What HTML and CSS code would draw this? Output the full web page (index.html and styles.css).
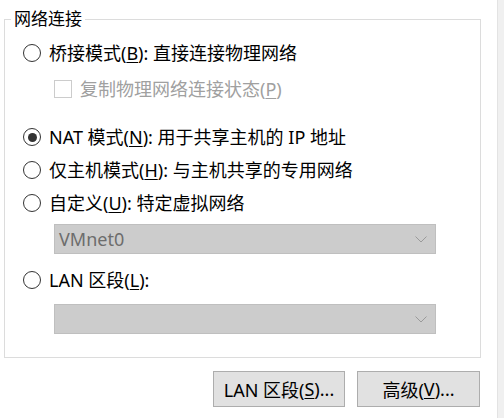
FILE: index.html
```html
<!DOCTYPE html>
<html lang="zh-CN">
<head>
<meta charset="utf-8">
<link rel="stylesheet" href="styles.css">
</head>
<body>
<div class="main">
  <fieldset class="group">
    <legend class="legend">网络连接</legend>
    <div class="row r-bridge">
      <span class="radio"></span>
      <span class="label">桥接模式(<u>B</u>): 直接连接物理网络</span>
    </div>
    <div class="row r-check">
      <span class="check"></span>
      <span class="label disabled">复制物理网络连接状态(<u>P</u>)</span>
    </div>
    <div class="row r-nat">
      <span class="radio on"></span>
      <span class="label">NAT 模式(<u>N</u>): 用于共享主机的 IP 地址</span>
    </div>
    <div class="row r-host">
      <span class="radio"></span>
      <span class="label">仅主机模式(<u>H</u>): 与主机共享的专用网络</span>
    </div>
    <div class="row r-custom">
      <span class="radio"></span>
      <span class="label">自定义(<u>U</u>): 特定虚拟网络</span>
    </div>
    <div class="select s-vmnet">
      <span class="select-text">VMnet0</span>
      <svg class="chev" width="12" height="7" viewBox="0 0 12 7"><polyline points="0.5,0.5 6,6 11.5,0.5" fill="none" stroke="#9a9a9a" stroke-width="1"/></svg>
    </div>
    <div class="row r-lan">
      <span class="radio"></span>
      <span class="label">LAN 区段(<u>L</u>):</span>
    </div>
    <div class="select s-lan">
      <span class="select-text"></span>
      <svg class="chev" width="12" height="7" viewBox="0 0 12 7"><polyline points="0.5,0.5 6,6 11.5,0.5" fill="none" stroke="#9a9a9a" stroke-width="1"/></svg>
    </div>
  </fieldset>
  <div class="buttons">
    <div class="btn btn-lan">LAN 区段(<u>S</u>)...</div>
    <div class="btn btn-adv">高级(<u>V</u>)...</div>
  </div>
</div>
<div class="strip"></div>
</body>
</html>
```

FILE: styles.css
```css
html, body {
  margin: 0;
  padding: 0;
  background: #ffffff;
}
body {
  width: 504px;
  height: 418px;
  display: flex;
  overflow: hidden;
  font-family: "Segoe UI", "Noto Sans", "Noto Sans CJK SC", sans-serif;
  font-size: 18px;
  color: #000;
}
.main {
  width: 497px;
  flex: none;
}
.strip {
  flex: 1;
  background: #f0f0f0;
  border-left: 1px solid #e3e3e3;
}
.group {
  margin: 9px 0 0 4px;
  width: 477px;
  height: 349px;
  box-sizing: border-box;
  border: 1px solid #dcdcdc;
  padding: 0;
  min-width: 0;
}
.legend {
  margin-left: 6px;
  padding: 0 3px;
  line-height: 20px;
  height: 20px;
  font-size: 17px;
  color: #000;
}
.row {
  display: flex;
  align-items: center;
  height: 24px;
}
.label {
  white-space: nowrap;
  line-height: 24px;
}
.label u {
  text-decoration-thickness: 1px;
  text-underline-offset: 2px;
}
.disabled {
  color: #a0a0a0;
}
.radio {
  width: 18px;
  height: 18px;
  box-sizing: border-box;
  border: 1px solid #333;
  border-radius: 50%;
  margin-left: 18px;
  margin-right: 8px;
  display: flex;
  align-items: center;
  justify-content: center;
  flex: none;
}
.radio.on::after {
  content: "";
  width: 9px;
  height: 9px;
  border-radius: 50%;
  background: #333;
}
.check {
  width: 18px;
  height: 18px;
  box-sizing: border-box;
  border: 1px solid #cccccc;
  background: #fff;
  margin-left: 49px;
  margin-right: 8px;
  flex: none;
}
.r-bridge { margin-top: 12px; }
.r-check { margin-top: 12px; }
.r-nat { margin-top: 24px; }
.r-host { margin-top: 9px; }
.r-custom { margin-top: 9px; }
.r-lan { margin-top: 14px; }
.select {
  margin-left: 49px;
  width: 382px;
  height: 30px;
  box-sizing: border-box;
  background: #cccccc;
  border: 1px solid #bfbfbf;
  display: flex;
  align-items: center;
  justify-content: space-between;
  padding: 0 8px 0 4px;
}
.s-vmnet { margin-top: 9px; }
.s-lan { margin-top: 12px; }
.select-text {
  color: #6d6d6d;
}
.chev {
  display: block;
  margin-top: 1px;
}
.buttons {
  display: flex;
  justify-content: flex-end;
  gap: 12px;
  margin-top: 13px;
  padding-right: 17px;
}
.btn {
  height: 36px;
  box-sizing: border-box;
  background: #e1e1e1;
  border: 1px solid #adadad;
  display: flex;
  align-items: center;
  justify-content: center;
  white-space: nowrap;
}
.btn u {
  text-decoration-thickness: 1px;
  text-underline-offset: 2px;
}
.btn-lan { width: 132px; }
.btn-adv { width: 123px; }
```
